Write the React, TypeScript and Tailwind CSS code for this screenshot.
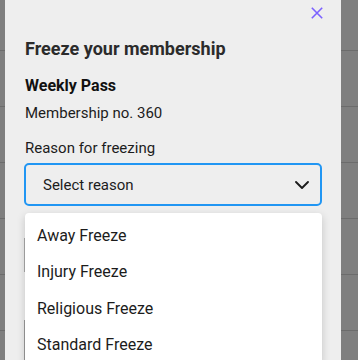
import { ChevronDown } from 'lucide-react';

const reasons = ['Away Freeze', 'Injury Freeze', 'Religious Freeze', 'Standard Freeze'];

export default function App() {
  return (
    <div
      className="relative h-[360px] w-[358px] overflow-hidden bg-[#7f7f7f]"
      style={{ fontFamily: 'Roboto, "Liberation Sans", sans-serif' }}
    >
      {/* table rows behind the overlay */}
      <div className="flex flex-col">
        <div className="h-[51px] border-b border-[#6c6c6c]" />
        <div className="h-[56px] border-b border-[#6c6c6c]" />
        <div className="h-[56px] border-b border-[#6c6c6c]" />
        <div className="h-[56px] border-b border-[#6c6c6c]" />
        <div className="h-[56px] border-b border-[#6c6c6c]" />
        <div className="h-[56px] border-b border-[#6c6c6c]" />
      </div>

      {/* dialog */}
      <div className="absolute left-[5px] top-0 h-full w-[336px] bg-[#eeeeee] px-[20px]">
        <button className="absolute right-[18px] top-[7px] text-[#7b61ff]">
          <svg width="12" height="12" viewBox="0 0 12 12" fill="none">
            <path d="M0.8 0.8L11.2 11.2M11.2 0.8L0.8 11.2" stroke="currentColor" strokeWidth="1.6" />
          </svg>
        </button>

        <h2 className="pt-[37px] text-[18px] font-bold leading-[24px] text-[#2b2b2b]">
          Freeze your membership
        </h2>
        <h3 className="mt-[13px] text-[16px] font-bold leading-[24px] text-[#111]">Weekly Pass</h3>
        <p className="mt-[5px] text-[15px] leading-[20px] text-[#1c1c1c]">Membership no. 360</p>
        <p className="mt-[15px] text-[15px] leading-[20px] text-[#1c1c1c]">Reason for freezing</p>

        <div className="relative mt-[5px]">
          <div className="-ml-[1px] flex h-[43px] w-[298px] items-center justify-between rounded-[5px] border-2 border-[#2196f3] pl-[17px] pr-[6px]">
            <span className="text-[15px] leading-[20px] text-[#1c1c1c]">Select reason</span>
            <ChevronDown size={24} strokeWidth={1.9} className="text-[#1c1c1c]" />
          </div>

          {/* form fields hidden behind the menu */}
          <div className="absolute left-[-1px] top-[75px] h-[34px] w-[1px] bg-[#a9a9a9]" />
          <div className="absolute left-[-1px] top-[157px] h-[40px] w-[1px] bg-[#9a9a9a]" />

          <ul className="absolute left-0 top-[50px] w-[297px] rounded-[4px] bg-white pt-[5px] shadow-[0_3px_8px_rgba(0,0,0,0.18)]">
            {reasons.map((r) => (
              <li key={r} className="px-[12px] py-[6px] text-[16px] leading-[24.4px] text-[#1c1c1c]">
                {r}
              </li>
            ))}
          </ul>
        </div>
      </div>
    </div>
  );
}
